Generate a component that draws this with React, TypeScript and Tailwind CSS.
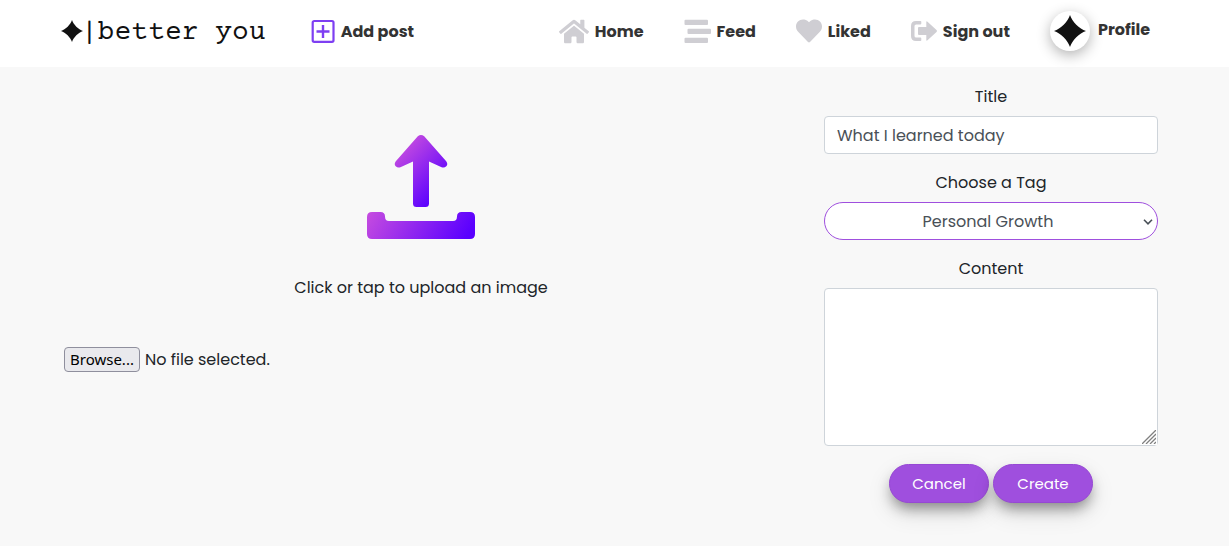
import { useRef, useState } from "react";
import type { ReactNode } from "react";
import { FaHome } from "react-icons/fa";

const STAR = "M12 0C13.6 5 19 10.400 24 12C19 13.600 13.600 19 12 24C10.400 19 5 13.600 0 12C5 10.400 10.400 5 12 0Z";

function Star({ className }: { className: string }) {
  return (
    <svg viewBox="0 0 24 24" className={className} fill="#111111" aria-hidden="true">
      <path d={STAR} />
    </svg>
  );
}

function PlusSquareIcon() {
  return (
    <svg viewBox="0 0 24 24" className="size-6" fill="none" stroke="#7e3ff2" aria-hidden="true">
      <rect x="1.700" y="2" width="20.800" height="20.800" rx="1.500" strokeWidth="2.200" />
      <path d="M12 6v13M5.500 12.500h13" strokeWidth="2.400" />
    </svg>
  );
}

function FeedIcon() {
  return (
    <svg viewBox="0 0 27 24" className="h-6 w-[27px]" fill="currentColor" aria-hidden="true">
      <rect x="0.500" y="0.700" width="23.500" height="5.200" rx="1" />
      <rect x="3.500" y="9.700" width="23.500" height="5.200" rx="1" />
      <rect x="0.500" y="18.700" width="23.500" height="5.200" rx="1" />
    </svg>
  );
}

function HeartIcon() {
  return (
    <svg viewBox="0 0 26 24" className="h-6 w-[26px]" fill="currentColor" aria-hidden="true">
      <path d="M13 3.200C10.700 1 8.800.600 7 .6C3 .6 0 3.700 0 7.500C0 9.900 1 11.600 2.600 13.300L12 23.100Q13 24 14 23.100L23.400 13.300C25 11.600 26 9.900 26 7.500C26 3.700 23 .6 19 .6C17.200.600 15.300 1 13 3.200Z" />
    </svg>
  );
}

function SignOutIcon() {
  return (
    <svg viewBox="0 0 26 20" className="h-5 w-[26px]" fill="currentColor" aria-hidden="true">
      <path d="M5 0H9.500Q10.300 0 10.300.8V2.600Q10.300 3.400 9.500 3.400H5.200Q3.500 3.400 3.500 5.100V14.900Q3.500 16.600 5.200 16.600H9.500Q10.300 16.600 10.300 17.400V19.200Q10.300 20 9.500 20H5Q0 20 0 15V5Q0 0 5 0Z" />
      <path d="M15.300 1.200Q15.300-.3 16.500.8L25.500 9.100Q26.400 10 25.500 10.900L16.500 19.200Q15.300 20.300 15.300 18.800V14H8Q7 14 7 13V7Q7 6 8 6H15.300Z" />
    </svg>
  );
}

function UploadIcon() {
  return (
    <svg viewBox="0 0 108 104" className="h-[104px] w-[108px]" aria-hidden="true">
      <defs>
        <linearGradient id="arrow-fill" gradientUnits="userSpaceOnUse" x1="34" y1="12" x2="78" y2="54">
          <stop offset="0" stopColor="#c44be0" />
          <stop offset="1" stopColor="#5a00ff" />
        </linearGradient>
        <linearGradient id="tray-fill" gradientUnits="userSpaceOnUse" x1="8" y1="68" x2="90" y2="118">
          <stop offset="0" stopColor="#c44be0" />
          <stop offset="1" stopColor="#5a00ff" />
        </linearGradient>
      </defs>
      <path
        fill="url(#arrow-fill)"
        d="M50.800 1.300Q54 -1.300 57.200 1.300L79.200 26.200Q81.300 29 79.300 31.300Q77.300 33.200 74.600 32.200L62 26.500V68.500Q62 72 58.500 72H49.500Q46 72 46 68.500V26.500L33.400 32.200Q30.700 33.200 28.700 31.300Q26.700 29 28.800 26.200Z"
      />
      <path
        fill="url(#tray-fill)"
        d="M5 77H13.500Q18 77 18 81.500Q18 86 22 86H86Q90 86 90 81.500Q90 77 94.500 77H103Q108 77 108 82V99Q108 104 103 104H5Q0 104 0 99V82Q0 77 5 77Z"
      />
    </svg>
  );
}

function NavLink({ icon, children }: { icon: ReactNode; children: ReactNode }) {
  return (
    <a href="#" className="flex items-center gap-1.5 font-bold whitespace-nowrap text-[#333333]">
      <span className="text-[#cfced3]">{icon}</span>
      <span className="pt-0.5">{children}</span>
    </a>
  );
}

function Header() {
  return (
    <header className="flex flex-wrap items-center justify-between gap-x-6 bg-white pt-[11px] pr-[79px] pb-4 pl-[61px]">
      <div className="flex items-center gap-[45px]">
        <a href="#" className="flex items-center text-[#111111]">
          <Star className="size-[22px]" />
          <span className="-ml-0.5 pt-1 font-['Courier_Prime','Liberation_Mono',monospace] text-[28px] leading-8 whitespace-nowrap">
            |better you
          </span>
        </a>
        <NavLink icon={<PlusSquareIcon />}>Add post</NavLink>
      </div>
      <nav className="flex flex-wrap items-center gap-10">
        <NavLink icon={<FaHome className="h-[27px] w-[30px]" />}>Home</NavLink>
        <NavLink icon={<FeedIcon />}>Feed</NavLink>
        <NavLink icon={<HeartIcon />}>Liked</NavLink>
        <NavLink icon={<SignOutIcon />}>Sign out</NavLink>
        <a href="#" className="flex items-start gap-2 font-bold text-[#333333]">
          <span className="flex size-10 items-center justify-center rounded-full bg-white shadow-[0_4px_14px_rgba(0,0,0,0.3)]">
            <Star className="size-8" />
          </span>
          <span className="leading-[38px]">Profile</span>
        </a>
      </nav>
    </header>
  );
}

function UploadPanel() {
  const fileRef = useRef<HTMLInputElement>(null);
  const [fileName, setFileName] = useState("No file selected.");
  return (
    <section className="px-[23px] pt-[51px]">
      <label htmlFor="image" className="flex cursor-pointer flex-col items-center gap-9">
        <UploadIcon />
        <span>Click or tap to upload an image</span>
      </label>
      <input
        ref={fileRef}
        id="image"
        type="file"
        accept="image/*"
        className="hidden"
        onChange={(e) => setFileName(e.target.files?.[0]?.name ?? "No file selected.")}
      />
      <div className="mt-[46px] flex items-start gap-[5px]">
        <button
          type="button"
          onClick={() => fileRef.current?.click()}
          className="rounded-[4px] border border-[#8f8f9d] bg-[#e9e9ed] px-[5px] font-['Noto_Sans',sans-serif] text-[15px] leading-[23px] text-black"
        >
          Browse...
        </button>
        <span>{fileName}</span>
      </div>
    </section>
  );
}

const FIELD = "block w-full border bg-white text-[#495057] outline-none focus:ring-2 focus:ring-[#9f4fde]/40";
const ACTION =
  "h-[39px] w-[100px] rounded-full border border-[#9648d4] bg-[#9f4fde] text-[15px] leading-5 text-white shadow-[0_8px_14px_-3px_rgba(0,0,0,0.4),0_10px_24px_rgba(0,0,0,0.12)]";

function PostForm() {
  return (
    <form className="flex flex-col gap-4 px-[23px] text-center" onSubmit={(e) => e.preventDefault()}>
      <div className="flex flex-col gap-1.5">
        <label htmlFor="title">Title</label>
        <input
          id="title"
          type="text"
          defaultValue="What I learned today"
          className={`${FIELD} h-[38px] rounded border-[#ced4da] px-3`}
        />
      </div>
      <div className="flex flex-col gap-1.5">
        <label htmlFor="tag">Choose a Tag</label>
        <div className="relative">
          <select
            id="tag"
            defaultValue="Personal Growth"
            className={`${FIELD} h-[38px] appearance-none rounded-full border-[#9f4fde] pt-0.5 pr-[18px] pl-3 [text-align-last:center]`}
          >
            <option>Personal Growth</option>
          </select>
          <svg
            viewBox="0 0 10 6"
            className="pointer-events-none absolute top-[17px] right-[5px] h-1.5 w-2.5"
            fill="none"
            stroke="#495057"
            strokeWidth="1.600"
            aria-hidden="true"
          >
            <path d="M1 .8L5 4.800L9 .8" />
          </svg>
        </div>
      </div>
      <div className="flex flex-col gap-1.5">
        <label htmlFor="content">Content</label>
        <div className="relative">
          <textarea
            id="content"
            rows={6}
            className={`${FIELD} h-[158px] resize-y rounded border-[#ced4da] px-3 py-1.5 [&::-webkit-resizer]:bg-white`}
          />
          <svg
            viewBox="0 0 14 14"
            className="pointer-events-none absolute right-0.5 bottom-0.5 size-3.5"
            stroke="#808080"
            strokeWidth="1.300"
            aria-hidden="true"
          >
            <path d="M0 14L14 0M4 14L14 4M8 14L14 8M12 14L14 12" />
          </svg>
        </div>
      </div>
      <div className="mt-0.5 flex justify-center gap-1">
        <button type="button" className={ACTION}>
          Cancel
        </button>
        <button type="submit" className={ACTION}>
          Create
        </button>
      </div>
    </form>
  );
}

export default function App() {
  return (
    <div className="flex min-h-screen flex-col bg-[#f8f8f8] font-['Poppins',sans-serif] text-base leading-[26px] text-[#212529]">
      <Header />
      <main className="grid grid-cols-[2fr_1fr] pt-[17px] pr-12 pb-10 pl-[41px]">
        <UploadPanel />
        <PostForm />
      </main>
    </div>
  );
}
